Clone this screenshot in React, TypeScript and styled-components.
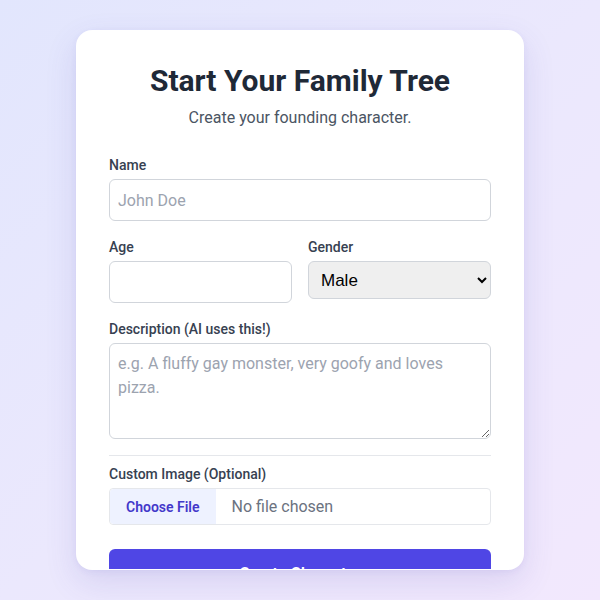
import React from "react";
import styled, { createGlobalStyle } from "styled-components";

const GlobalStyle = createGlobalStyle`
  * { box-sizing: border-box; }
  html, body { margin: 0; padding: 0; }
  body {
    font-family: Roboto, "Liberation Sans", Arial, sans-serif;
    background: linear-gradient(135deg, #e2e6fd 0%, #ebe8fd 50%, #f2e8fd 100%);
    min-height: 100vh;
  }
`;

const Page = styled.main`
  min-height: 100vh;
  display: flex;
  align-items: center;
  justify-content: center;
`;

const Card = styled.section`
  width: 448px;
  max-height: 90vh;
  overflow-y: auto;
  scrollbar-width: none;
  background: #ffffff;
  border: 1px solid rgba(255, 255, 255, 0.7);
  border-radius: 16px;
  padding: 32px;
  box-shadow: 0 12px 32px rgba(76, 70, 180, 0.14), 0 2px 6px rgba(76, 70, 180, 0.06);
  &::-webkit-scrollbar { display: none; }
`;

const Title = styled.h1`
  margin: 0 0 7px;
  font-size: 30px;
  line-height: 36px;
  font-weight: 700;
  color: #1f2937;
  text-align: center;
`;

const Subtitle = styled.p`
  margin: 0 0 25px;
  font-size: 16px;
  line-height: 24px;
  color: #4b5563;
  text-align: center;
`;

const Form = styled.form`
  display: flex;
  flex-direction: column;
  gap: 16px;
`;

const Field = styled.div<{ $divided?: boolean }>`
  display: flex;
  flex-direction: column;
  ${(p) => p.$divided && `border-top: 1px solid #e5e7eb; padding-top: 8px;`}
`;

const Row = styled.div`
  display: grid;
  grid-template-columns: 1fr 1fr;
  gap: 16px;
`;

const Label = styled.label`
  display: block;
  margin-bottom: 4px;
  font-size: 14px;
  line-height: 20px;
  font-weight: 500;
  color: #374151;
`;

const fieldBase = `
  width: 100%;
  font-family: Roboto, "Liberation Sans", Arial, sans-serif;
  font-size: 16px;
  color: #111827;
  background: #ffffff;
  border: 1px solid #d1d5db;
  border-radius: 6px;
  outline: none;
  &::placeholder { color: #9ca3af; }
`;

const TextInput = styled.input`
  ${fieldBase}
  height: 42px;
  padding: 0 8px;
`;

const Select = styled.select`
  width: 100%;
  height: 38px;
  padding: 0 8px;
  font-family: "Liberation Sans", Arial, sans-serif;
  font-size: 17px;
  color: #000000;
  background-color: #efefef;
  border: 1px solid #d1d5db;
  border-radius: 6px;
`;

const TextArea = styled.textarea`
  ${fieldBase}
  height: 96px;
  padding: 8px;
  line-height: 24px;
  resize: vertical;
  display: block;
`;

const FileInput = styled.input`
  width: 100%;
  height: 37px;
  padding: 0;
  font-family: Roboto, "Liberation Sans", Arial, sans-serif;
  font-size: 16px;
  color: #6b7280;
  border: 1px solid #e5e7eb;
  border-radius: 4px;
  background: #ffffff;
  &::file-selector-button {
    height: 35px;
    margin-right: 16px;
    padding: 0 16px;
    border: 0;
    border-radius: 4px 0 0 4px;
    background: #eef2ff;
    color: #4338ca;
    font-family: Roboto, "Liberation Sans", Arial, sans-serif;
    font-size: 14px;
    font-weight: 600;
  }
`;

const Submit = styled.button`
  margin-top: 8px;
  flex-shrink: 0;
  height: 48px;
  width: 100%;
  border: 0;
  border-radius: 6px;
  background: #4f46e5;
  color: #ffffff;
  font-family: Roboto, "Liberation Sans", Arial, sans-serif;
  font-size: 16px;
  font-weight: 600;
  cursor: pointer;
`;

export default function App() {
  return (
    <>
      <GlobalStyle />
      <Page>
        <Card>
          <Title>Start Your Family Tree</Title>
          <Subtitle>Create your founding character.</Subtitle>
          <Form onSubmit={(e) => e.preventDefault()}>
            <Field>
              <Label htmlFor="name">Name</Label>
              <TextInput id="name" type="text" placeholder="John Doe" />
            </Field>
            <Row>
              <Field>
                <Label htmlFor="age">Age</Label>
                <TextInput id="age" type="number" />
              </Field>
              <Field>
                <Label htmlFor="gender">Gender</Label>
                <Select id="gender" defaultValue="Male">
                  <option>Male</option>
                  <option>Female</option>
                  <option>Other</option>
                </Select>
              </Field>
            </Row>
            <Field>
              <Label htmlFor="desc">Description (AI uses this!)</Label>
              <TextArea
                id="desc"
                placeholder="e.g. A fluffy gay monster, very goofy and loves pizza."
              />
            </Field>
            <Field $divided>
              <Label htmlFor="image">Custom Image (Optional)</Label>
              <FileInput id="image" type="file" accept="image/*" />
            </Field>
            <Submit type="submit">Create Character</Submit>
          </Form>
        </Card>
      </Page>
    </>
  );
}
